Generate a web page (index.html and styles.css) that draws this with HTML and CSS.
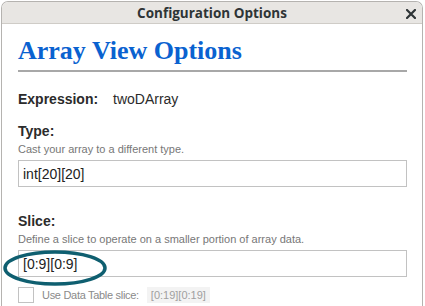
FILE: index.html
```html
<!DOCTYPE html>
<html lang="en">
<head>
    <meta charset="UTF-8">
    <title>Configuration Options</title>
    <link rel="stylesheet" href="styles.css">
</head>
<body>
    <div class="window">
        <div class="titlebar">
            <span class="title">Configuration Options</span>
            <svg class="close" width="10" height="10" viewBox="0 0 10 10">
                <path d="M1 1 L9 9 M9 1 L1 9" stroke="#2e3436" stroke-width="2.2" stroke-linecap="square"/>
            </svg>
        </div>
        <div class="content">
            <h1>Array View Options</h1>

            <div class="expr-row">
                <span class="label">Expression:</span>
                <span class="expr-value">twoDArray</span>
            </div>

            <div class="field">
                <div class="label">Type:</div>
                <div class="hint">Cast your array to a different type.</div>
                <input class="text-input" type="text" value="int[20][20]">
            </div>

            <div class="field">
                <div class="label">Slice:</div>
                <div class="hint">Define a slice to operate on a smaller portion of array data.</div>
                <div class="input-wrap">
                    <input class="text-input" type="text" value="[0:9][0:9]">
                    <!-- highlight ring drawn over the slice value -->
                    <svg class="ring" width="106" height="40" viewBox="0 0 106 40">
                        <ellipse cx="53" cy="20" rx="50" ry="16" fill="none" stroke="#0f5f70" stroke-width="3.5"/>
                    </svg>
                </div>
                <label class="check-row">
                    <span class="checkbox"></span>
                    <span class="check-text">Use Data Table slice:</span>
                    <code class="slice-code">[0:19][0:19]</code>
                </label>
            </div>
        </div>
    </div>
</body>
</html>
```

FILE: styles.css
```css
body {
    margin: 0;
    background-color: #ffffff;
    font-family: 'Liberation Sans', Arial, sans-serif;
    overflow: hidden;
}

.window {
    margin: 1px 2px 0 1px;
    height: 310px;
    border: 1px solid #b5b3b0;
    border-bottom: none;
    border-radius: 7px 7px 0 0;
    background-color: #ffffff;
    overflow: hidden;
}

.titlebar {
    display: flex;
    align-items: center;
    justify-content: center;
    position: relative;
    height: 21px;
    background-color: #e8e6e3;
    border-bottom: 1px solid #cfccc7;
}

.title {
    font-family: 'Open Sans', 'DejaVu Sans', sans-serif;
    font-weight: 700;
    font-size: 13.5px;
    color: #2e3436;
    padding-top: 1px;
}

.close {
    position: absolute;
    right: 6px;
    top: 7px;
}

.content {
    padding: 0 15px 0 16px;
}

h1 {
    margin: 12px 0 0;
    padding-bottom: 4px;
    font-family: 'Liberation Serif', 'Times New Roman', serif;
    font-size: 26px;
    line-height: 30px;
    font-weight: 700;
    color: #0a62d0;
    border-bottom: 2px solid #a8a8a8;
}

.label {
    font-weight: 700;
    font-size: 14px;
    color: #2b2b2b;
    line-height: 17px;
}

.expr-row {
    display: flex;
    margin-top: 19px;
    font-size: 14px;
    line-height: 17px;
}

.expr-row .label {
    width: 95px;
}

.expr-value {
    color: #2b2b2b;
}

.field {
    margin-top: 15px;
}

.hint {
    margin-top: 3px;
    font-size: 11px;
    line-height: 13px;
    color: #777777;
}

.text-input {
    display: block;
    box-sizing: border-box;
    width: 100%;
    height: 27px;
    margin-top: 4px;
    padding: 0 4px;
    border: 1px solid #c2c2c2;
    border-radius: 0;
    font-family: 'Liberation Sans', Arial, sans-serif;
    font-size: 14px;
    color: #222222;
    outline: none;
}

.field + .field {
    margin-top: 26px;
}

.input-wrap {
    position: relative;
}

.ring {
    position: absolute;
    left: -16px;
    top: -2px;
}

.check-row {
    display: flex;
    align-items: center;
    gap: 8px;
    margin-top: 10px;
    font-size: 11px;
    letter-spacing: -0.3px;
    color: #8a8a8a;
}

.checkbox {
    width: 14px;
    height: 14px;
    border: 1px solid #c2c2c2;
}

.check-text {
    color: #8a8a8a;
}

.slice-code {
    padding: 2px 4px;
    background-color: #f3f3f3;
    font-family: 'Liberation Sans', Arial, sans-serif;
    font-size: 11px;
    letter-spacing: 0;
    color: #a0a0a0;
}
```
